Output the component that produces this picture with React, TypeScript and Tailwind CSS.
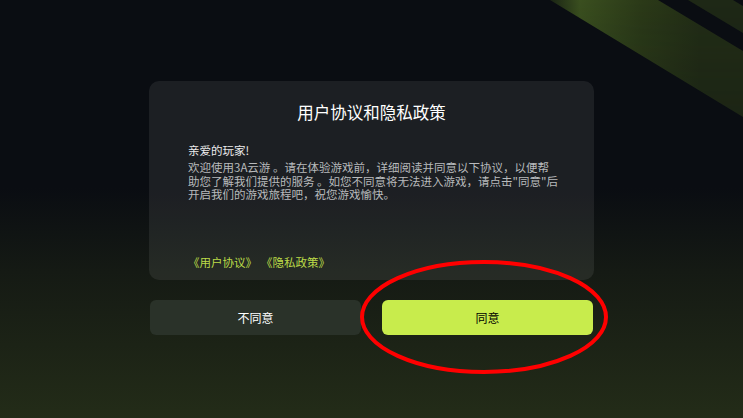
export default function App() {
  const font = { fontFamily: '"Noto Sans CJK SC", "Noto Sans", sans-serif' };

  return (
    <div
      className="relative h-[418px] w-[743px] overflow-hidden bg-[linear-gradient(180deg,#0a0d12_0%,#0a0d12_45%,#151a14_65%,#232c18_100%)]"
      style={font}
    >
      {/* diagonal stripes, top right */}
      <svg
        className="pointer-events-none absolute left-0 top-0"
        width="743"
        height="418"
        viewBox="0 0 743 418"
      >
        <defs>
          <linearGradient id="band1" x1="550" y1="0" x2="700" y2="0" gradientUnits="userSpaceOnUse">
            <stop offset="0" stopColor="#1a2414" />
            <stop offset="0.2" stopColor="#3a4f1f" />
            <stop offset="0.6" stopColor="#2b3a18" />
            <stop offset="1" stopColor="#222d16" />
          </linearGradient>
          <linearGradient id="fade" x1="0" y1="0" x2="0" y2="120" gradientUnits="userSpaceOnUse">
            <stop offset="0" stopColor="#fff" stopOpacity="1" />
            <stop offset="1" stopColor="#fff" stopOpacity="0.75" />
          </linearGradient>
          <mask id="m1">
            <rect x="0" y="0" width="743" height="130" fill="url(#fade)" />
          </mask>
        </defs>
        <g mask="url(#m1)">
          <polygon points="550,0 658,0 743,51 743,117" fill="url(#band1)" />
          <polygon points="688,0 733,0 743,6 743,33" fill="#1e2816" />
        </g>
      </svg>

      <div className="relative flex flex-col items-center">
        <div className="mt-[81px] flex h-[199px] w-[445px] flex-col rounded-[10px] bg-white/[0.075] px-[39px] pb-[11px] pt-[19px]">
          <h1 className="text-center text-[16.5px] leading-[24px] text-white">
            用户协议和隐私政策
          </h1>
          <p className="mt-[19px] text-[11.5px] leading-[14px] text-[#ececec]">
            亲爱的玩家!
          </p>
          <p className="mt-[4px] whitespace-nowrap text-[11.5px] leading-[13.5px] text-[#b8babc]">
            欢迎使用3A云游 。请在体验游戏前，详细阅读并同意以下协议，以便帮
            <br />
            助您了解我们提供的服务 。如您不同意将无法进入游戏，请点击"同意"后
            <br />
            开启我们的游戏旅程吧，祝您游戏愉快。
          </p>
          <div className="mt-auto flex text-[11.5px] leading-[14px] text-[#bcdc48]">
            <span>《用户协议》</span>
            <span className="ml-[4px]">《隐私政策》</span>
          </div>
        </div>

        <div className="mt-[20px] flex w-[443px] gap-[21px]">
          <button
            type="button"
            className="flex h-[35px] flex-1 items-center justify-center rounded-[6px] bg-[#2a3229] text-[12px] text-white"
          >
            不同意
          </button>
          <button
            type="button"
            className="flex h-[35px] flex-1 items-center justify-center rounded-[6px] bg-[#c8ec4c] text-[12px] text-black"
          >
            同意
          </button>
        </div>
      </div>

      {/* red annotation ring */}
      <svg
        className="pointer-events-none absolute left-0 top-0"
        width="743"
        height="418"
        viewBox="0 0 743 418"
      >
        <ellipse cx="484" cy="317" rx="122" ry="55" fill="none" stroke="#ff0000" strokeWidth="4" />
      </svg>
    </div>
  );
}
